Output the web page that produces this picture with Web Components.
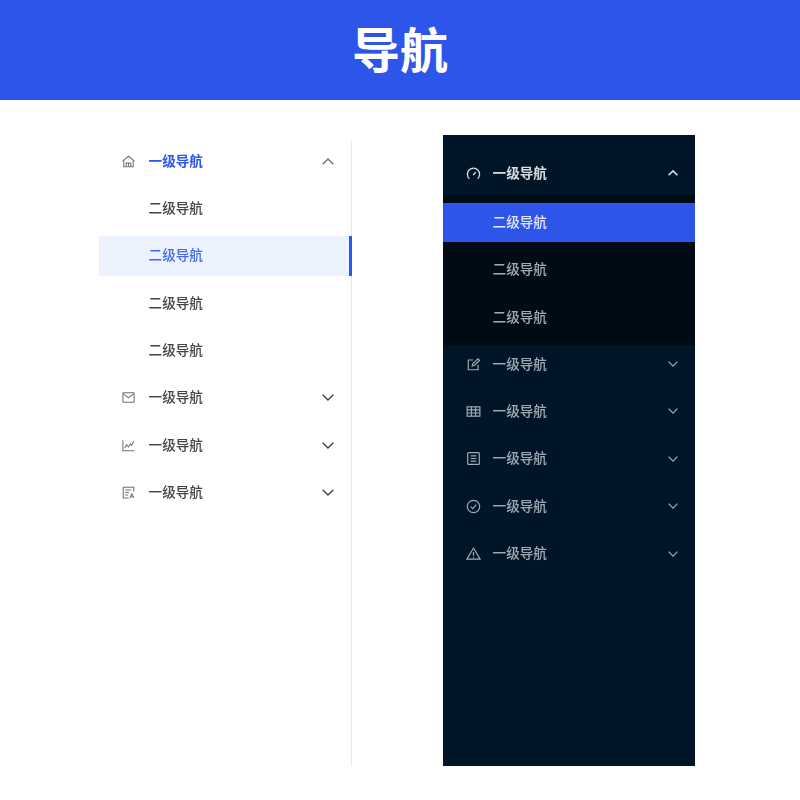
<!DOCTYPE html>
<html lang="zh">
<head>
<meta charset="utf-8">
<title>导航</title>
<style>
    html, body { margin: 0; padding: 0; background: #fff; }
    body { font-family: "Noto Sans CJK SC", "Liberation Sans", sans-serif; }
</style>
</head>
<body>
<page-banner>导航</page-banner>
<demo-stage>
    <side-menu theme="light">
        <menu-item level="1" icon="home" open active>一级导航</menu-item>
        <menu-item level="2">二级导航</menu-item>
        <menu-item level="2" selected>二级导航</menu-item>
        <menu-item level="2">二级导航</menu-item>
        <menu-item level="2">二级导航</menu-item>
        <menu-item level="1" icon="mail" closed>一级导航</menu-item>
        <menu-item level="1" icon="chart" closed>一级导航</menu-item>
        <menu-item level="1" icon="form" closed>一级导航</menu-item>
    </side-menu>
    <side-menu theme="dark">
        <menu-item theme="dark" level="1" icon="gauge" open active>一级导航</menu-item>
        <sub-menu>
            <menu-item theme="dark" level="2" selected>二级导航</menu-item>
            <menu-item theme="dark" level="2">二级导航</menu-item>
            <menu-item theme="dark" level="2">二级导航</menu-item>
        </sub-menu>
        <menu-item theme="dark" level="1" icon="edit" closed>一级导航</menu-item>
        <menu-item theme="dark" level="1" icon="table" closed>一级导航</menu-item>
        <menu-item theme="dark" level="1" icon="list" closed>一级导航</menu-item>
        <menu-item theme="dark" level="1" icon="check" closed>一级导航</menu-item>
        <menu-item theme="dark" level="1" icon="warn" closed>一级导航</menu-item>
    </side-menu>
</demo-stage>

<script>
// Все иконки на сетке 16x16, только контур
const ICONS = {
    home: '<path d="M1.6 7.6 8 2.4l6.4 5.2"/><path d="M3 7v6.6h10V7"/><path d="M5.6 13.4V9.6h4.8v3.8M8 9.6v3.8"/>',
    mail: '<rect x="2" y="3" width="12" height="10" rx=".6"/><path d="M2.4 3.8 8 8.4l5.6-4.6"/>',
    chart: '<path d="M2 2.4v11.2h12.4"/><path d="M3.8 10.6l2.2-3.2 2 2.2 2-3.4 1.2 1.6 2.4-4.4"/>',
    form: '<path d="M13.6 7V2.4H2.4v11.4h6"/><path d="M4.4 5.4h6.4M4.4 8h4M4.4 10.6h3"/><path d="M9.6 14l2-4.6 2.2 4.6M10.4 12.6h2.6"/>',
    gauge: '<path d="M3.6 13.6A6.5 6.5 0 1 1 12.4 13.6"/><path d="M7.6 9.6l2.8-3"/>',
    edit: '<path d="M12.8 8.6v5H2.4V3.2h5.2"/><path d="M6.6 9.6l.5-2.2 5.6-5.4 1.7 1.7-5.6 5.4z"/>',
    table: '<rect x="1.2" y="3" width="13.6" height="10"/><path d="M1.2 6.3h13.6M1.2 9.6h13.6M5.8 3v10M10.2 3v10"/>',
    list: '<rect x="1.8" y="1.8" width="12.4" height="12.4" rx="1"/><path d="M5 5.2h6M5 8h6M5 10.8h6"/>',
    check: '<circle cx="8" cy="8" r="6.6"/><path d="M5 8.2l2.2 2.1L11 6"/>',
    warn: '<path d="M8 2.2 15 14H1z"/><path d="M8 6.4v4M8 11.4v1.2"/>'
};

class PageBanner extends HTMLElement {
    constructor() {
        super();
        this.attachShadow({ mode: 'open' });
    }

    connectedCallback() {
        this.shadowRoot.innerHTML = `
            <style>
                :host {
                    display: flex;
                    align-items: center;
                    justify-content: center;
                    box-sizing: border-box;
                    height: 100px;
                    padding-bottom: 6px;
                    background-color: #2e55ea;
                    color: #fff;
                    font-size: 48px;
                    font-weight: 700;
                    line-height: 1;
                }
            </style>
            <slot></slot>
        `;
    }
}

class DemoStage extends HTMLElement {
    constructor() {
        super();
        this.attachShadow({ mode: 'open' });
    }

    connectedCallback() {
        this.shadowRoot.innerHTML = `
            <style>
                :host {
                    display: grid;
                    grid-template-columns: 253px 252px;
                    column-gap: 91px;
                    align-items: stretch;
                    padding: 35px 0 34px 99px;
                    height: 631px;
                }
            </style>
            <slot></slot>
        `;
    }
}

class SideMenu extends HTMLElement {
    constructor() {
        super();
        this.attachShadow({ mode: 'open' });
    }

    connectedCallback() {
        this.shadowRoot.innerHTML = `
            <style>
                :host {
                    display: flex;
                    flex-direction: column;
                    gap: 7.4px;
                    box-sizing: border-box;
                }
                :host([theme="light"]) {
                    margin-top: 6px;
                    border-right: 1px solid #e8e8e8;
                    background-color: #fff;
                }
                :host([theme="dark"]) {
                    padding-top: 18px;
                    background-color: #001628;
                }
            </style>
            <slot></slot>
        `;
    }
}

class SubMenu extends HTMLElement {
    constructor() {
        super();
        this.attachShadow({ mode: 'open' });
    }

    connectedCallback() {
        this.shadowRoot.innerHTML = `
            <style>
                :host {
                    display: flex;
                    flex-direction: column;
                    gap: 7.4px;
                    margin: -5.9px 0 -8px;
                    padding: 8px 0 7.4px;
                    background-color: #000b16;
                }
            </style>
            <slot></slot>
        `;
    }
}

class MenuItem extends HTMLElement {
    constructor() {
        super();
        this.attachShadow({ mode: 'open' });
    }

    connectedCallback() {
        const iconName = this.getAttribute('icon');
        const icon = iconName
            ? `<svg class="icon" viewBox="0 0 16 16">${ICONS[iconName]}</svg>`
            : '<span class="icon"></span>';

        let arrow = '';
        if (this.hasAttribute('open')) {
            arrow = '<svg class="arrow" viewBox="0 0 12 7"><path d="M.7 6.3 6 1l5.3 5.3"/></svg>';
        } else if (this.hasAttribute('closed')) {
            arrow = '<svg class="arrow" viewBox="0 0 12 7"><path d="M.7.7 6 6l5.3-5.3"/></svg>';
        }

        this.shadowRoot.innerHTML = `
            <style>
                :host {
                    display: flex;
                    align-items: center;
                    flex: none;
                    height: 40px;
                    padding: 0 17px 0 22px;
                    font-size: 13.6px;
                    font-weight: 500;
                    color: #444;
                }
                .icon {
                    flex: none;
                    width: 15px;
                    height: 15px;
                    margin-right: 12.6px;
                    fill: none;
                    stroke: #6f6f6f;
                    stroke-width: 1.1;
                    filter: blur(.25px);
                }
                .label {
                    flex: 1;
                    padding-bottom: 3px;
                    white-space: nowrap;
                    filter: blur(.3px);
                }
                .arrow {
                    flex: none;
                    width: 12px;
                    height: 7px;
                    fill: none;
                    stroke: #3f3f3f;
                    stroke-width: 1.35;
                }
                :host([open]) .arrow { stroke: #707070; }
                :host([active]) { color: #2e55ea; font-weight: 700; }
                :host([selected]) {
                    margin-right: -1px;
                    color: #4469ec;
                    background-color: #ecf3fe;
                    box-shadow: inset -3px 0 0 #2e55ea;
                }

                :host([theme="dark"]) {
                    padding: 0 17px 0 23px;
                    color: #a3abb2;
                }
                :host([theme="dark"]) .icon { stroke: #a3abb2; stroke-width: 1.25; margin-right: 11.6px; }
                :host([theme="dark"]) .arrow { stroke: #a3abb2; stroke-width: 1.5; width: 10px; height: 6px; }
                :host([theme="dark"][open]) .arrow { stroke: #e6e8ea; stroke-width: 1.8; }
                :host([theme="dark"][active]) { color: #d9dcdf; font-weight: 700; }
                :host([theme="dark"][active]) .icon { stroke: #d9dcdf; stroke-width: 1.4; }
                :host([theme="dark"][selected]) {
                    margin-right: 0;
                    height: 39.5px;
                    margin-bottom: .5px;
                    color: #e3e8fb;
                    background-color: #2e55ea;
                    box-shadow: none;
                }
            </style>
            ${icon}
            <span class="label"><slot></slot></span>
            ${arrow}
        `;
    }
}

customElements.define('page-banner', PageBanner);
customElements.define('demo-stage', DemoStage);
customElements.define('side-menu', SideMenu);
customElements.define('sub-menu', SubMenu);
customElements.define('menu-item', MenuItem);
</script>
</body>
</html>
